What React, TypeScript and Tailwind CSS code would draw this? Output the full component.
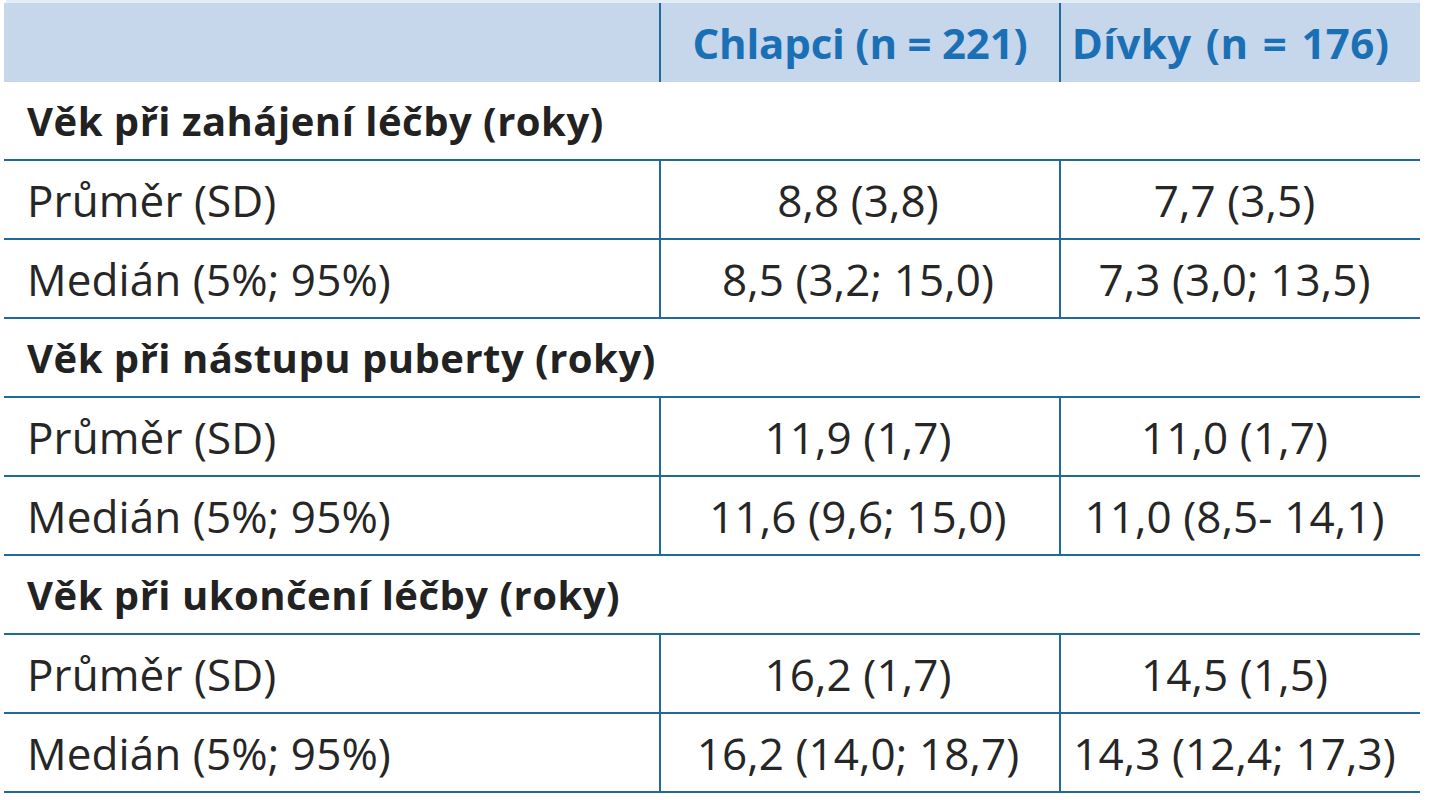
const FONT = "font-['Open_Sans','Noto_Sans',sans-serif]";

type Row =
  | { kind: "section"; label: string }
  | { kind: "data"; label: string; boys: string; girls: string };

const ROWS: Row[] = [
  { kind: "section", label: "Věk při zahájení léčby (roky)" },
  { kind: "data", label: "Průměr (SD)", boys: "8,8 (3,8)", girls: "7,7 (3,5)" },
  { kind: "data", label: "Medián (5%; 95%)", boys: "8,5 (3,2; 15,0)", girls: "7,3 (3,0; 13,5)" },
  { kind: "section", label: "Věk při nástupu puberty (roky)" },
  { kind: "data", label: "Průměr (SD)", boys: "11,9 (1,7)", girls: "11,0 (1,7)" },
  { kind: "data", label: "Medián (5%; 95%)", boys: "11,6 (9,6; 15,0)", girls: "11,0 (8,5- 14,1)" },
  { kind: "section", label: "Věk při ukončení léčby (roky)" },
  { kind: "data", label: "Průměr (SD)", boys: "16,2 (1,7)", girls: "14,5 (1,5)" },
  { kind: "data", label: "Medián (5%; 95%)", boys: "16,2 (14,0; 18,7)", girls: "14,3 (12,4; 17,3)" },
];

export default function App() {
  return (
    <div className={`w-[1438px] h-[800px] overflow-hidden bg-white ${FONT}`}>
      <div className="h-[3px] ml-[6px] w-[1414px] bg-[#e4ecf6]" />
      <div className="ml-[4px] w-[1416px]">
        <div className="grid grid-cols-[655px_400px_361px] h-[79px] bg-[#c6d6eb]">
          <div />
          <div className="flex items-center justify-center border-l-2 border-[#1f6a99] text-[42px] font-bold tracking-[-0.2px] text-[#1b70b5]">
            Chlapci (n = 221)
          </div>
          <div className="flex items-center justify-center border-l-2 border-[#1f6a99] pr-[20px] text-[42px] font-bold tracking-[0.4px] [word-spacing:3px] text-[#1b70b5]">
            Dívky (n = 176)
          </div>
        </div>
        {ROWS.map((row, i) =>
          row.kind === "section" ? (
            <div
              key={i}
              className="flex h-[79px] items-center border-b-2 border-[#1f6a99] pl-[23px] text-[40px] font-bold tracking-[0.5px] text-[#222222]"
            >
              {row.label}
            </div>
          ) : (
            <div
              key={i}
              className="grid grid-cols-[655px_400px_361px] h-[79px] border-b-2 border-[#1f6a99] text-[44px] tracking-[0.1px] text-[#262626]"
            >
              <div className="flex items-center pl-[23px]">{row.label}</div>
              <div className="flex items-center justify-center border-l-2 border-[#1f6a99] pr-[4px]">
                {row.boys}
              </div>
              <div className="flex items-center justify-center border-l-2 border-[#1f6a99] pr-[12px]">
                {row.girls}
              </div>
            </div>
          )
        )}
      </div>
    </div>
  );
}
